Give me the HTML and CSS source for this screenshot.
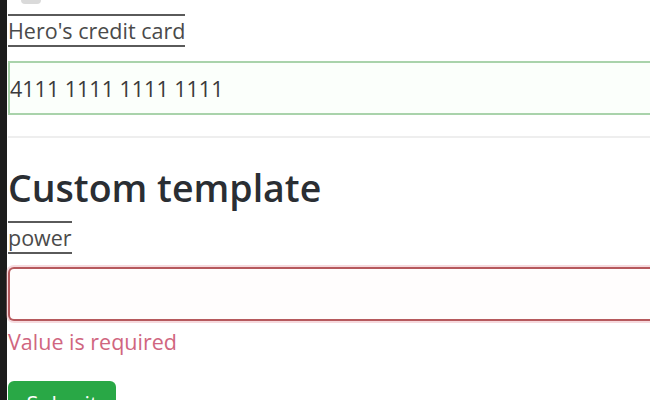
FILE: index.html
```html
<!DOCTYPE html>
<html>
<head>
<meta charset="utf-8">
<link rel="stylesheet" href="styles.css">
</head>
<body>
<div class="page">
  <div class="strip"></div>
  <main class="content">
    <div class="prev"><span class="prev-dot"></span></div>
    <label class="field-label">Hero's credit card</label>
    <input class="field valid" type="text" value="4111 1111 1111 1111">
    <hr class="divider">
    <h3 class="title">Custom template</h3>
    <label class="field-label">power</label>
    <input class="field invalid" type="text" value="">
    <div class="error">Value is required</div>
    <button class="submit" type="button">Submit</button>
  </main>
</div>
</body>
</html>
```

FILE: styles.css
```css
html, body {
  margin: 0;
  padding: 0;
  background: #fff;
  overflow: hidden;
}
.page {
  display: flex;
  width: 650px;
  height: 400px;
  overflow: hidden;
  font-family: "Open Sans", "Noto Sans", sans-serif;
  color: #212529;
}
.strip {
  flex: 0 0 7px;
  background: #1c1c1c;
}
.content {
  flex: 1;
  display: flex;
  flex-direction: column;
  align-items: flex-start;
  padding-left: 1px;
  min-width: 0;
}
.content > * {
  flex-shrink: 0;
}
.prev {
  height: 14px;
  width: 100%;
}
.prev-dot {
  display: block;
  margin-left: 13px;
  width: 20px;
  height: 4px;
  background: #dadada;
  border-radius: 0 0 10px 10px;
}
.field-label {
  display: block;
  border-top: 2px solid #5a5a5a;
  border-bottom: 2px solid #5a5a5a;
  font-size: 21.5px;
  line-height: 29px;
  color: #4a4a4a;
  padding: 0;
}
.field {
  box-sizing: border-box;
  width: 660px;
  height: 54px;
  margin-top: 14px;
  font-family: inherit;
  font-size: 21.5px;
  color: #3a3a3a;
  padding: 0;
  outline: none;
}
.valid {
  border: 2px solid #a9d3ab;
  border-right: none;
  background: #fbfffb;
  border-radius: 0;
}
.invalid {
  border: 2px solid #b6595d;
  border-right: none;
  border-radius: 6px 0 0 6px;
  background: #fffdfd;
  box-shadow: 0 0 0 2px rgba(230, 150, 160, 0.35);
  margin-top: 13px;
}
.divider {
  width: 100%;
  margin: 21px 0 0 0;
  border: 0;
  border-top: 2px solid #eeeeee;
}
.title {
  margin: 27px 0 0 0;
  font-size: 37.5px;
  font-weight: 600;
  line-height: 46px;
  color: #2a2e33;
}
.title + .field-label {
  margin-top: 10px;
}
.error {
  margin-top: 7px;
  font-size: 21.5px;
  line-height: 28px;
  color: #d0667f;
}
.submit {
  margin-top: 25px;
  width: 108px;
  height: 40px;
  border: 0;
  border-radius: 6px 6px 0 0;
  background: #29a846;
  color: #fff;
  font-family: inherit;
  font-size: 21.5px;
  line-height: 29px;
  padding: 8px 0 0 0;
  display: flex;
  justify-content: center;
  align-items: flex-start;
}
```
